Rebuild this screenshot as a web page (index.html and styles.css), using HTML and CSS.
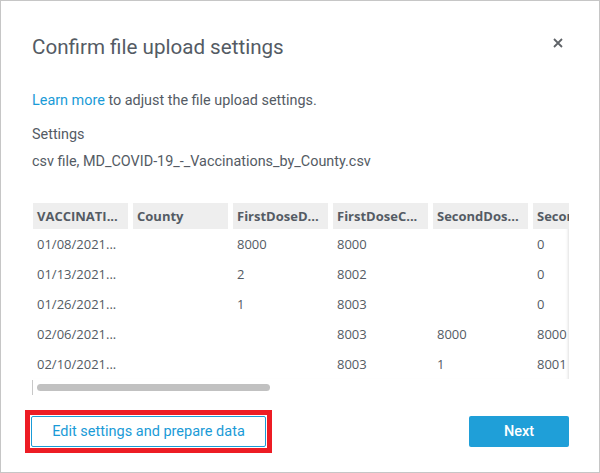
FILE: index.html
```html
<!DOCTYPE html>
<html lang="en">
<head>
    <meta charset="UTF-8">
    <meta name="viewport" content="width=device-width, initial-scale=1.0">
    <title>Confirm file upload settings</title>
    <link rel="stylesheet" href="styles.css">
</head>
<body>
    <div class="dialog">
        <header class="dialog-header">
            <h1>Confirm file upload settings</h1>
            <button class="close" aria-label="Close">
                <svg width="10" height="10" viewBox="0 0 10 10">
                    <path d="M1 1 L9 9 M9 1 L1 9" stroke="#5f6368" stroke-width="1.8" fill="none"/>
                </svg>
            </button>
        </header>

        <p class="intro"><a href="#">Learn more</a> to adjust the file upload settings.</p>
        <p class="label">Settings</p>
        <p class="file">csv file, MD_COVID-19_-_Vaccinations_by_County.csv</p>

        <div class="preview">
            <div class="grid">
                <div class="th">VACCINATI...</div>
                <div class="th">County</div>
                <div class="th">FirstDoseD...</div>
                <div class="th">FirstDoseC...</div>
                <div class="th">SecondDos...</div>
                <div class="th">SecondDoseCumulative</div>

                <div class="td">01/08/2021...</div>
                <div class="td"></div>
                <div class="td">8000</div>
                <div class="td">8000</div>
                <div class="td"></div>
                <div class="td">0</div>

                <div class="td">01/13/2021...</div>
                <div class="td"></div>
                <div class="td">2</div>
                <div class="td">8002</div>
                <div class="td"></div>
                <div class="td">0</div>

                <div class="td">01/26/2021...</div>
                <div class="td"></div>
                <div class="td">1</div>
                <div class="td">8003</div>
                <div class="td"></div>
                <div class="td">0</div>

                <div class="td">02/06/2021...</div>
                <div class="td"></div>
                <div class="td"></div>
                <div class="td">8003</div>
                <div class="td">8000</div>
                <div class="td">8000</div>

                <div class="td">02/10/2021...</div>
                <div class="td"></div>
                <div class="td"></div>
                <div class="td">8003</div>
                <div class="td">1</div>
                <div class="td">8001</div>
            </div>
        </div>
        <div class="scrollbar">
            <div class="thumb"></div>
        </div>

        <footer class="dialog-footer">
            <div class="highlight">
                <button class="btn btn-secondary">Edit settings and prepare data</button>
            </div>
            <button class="btn btn-primary">Next</button>
        </footer>
    </div>
</body>
</html>
```

FILE: styles.css
```css
html, body {
    margin: 0;
    height: 100%;
    background-color: #ffffff;
}
.dialog {
    box-sizing: border-box;
    width: 600px;
    height: 473px;
    border: 1px solid #c6c6c6;
    padding: 0 30px 0 31px;
    font-family: Roboto, "Noto Sans", sans-serif;
    color: #545b64;
}
.dialog-header {
    display: flex;
    justify-content: space-between;
    align-items: center;
    padding-top: 31px;
}
.dialog-header h1 {
    margin: 0;
    font-size: 20.6px;
    font-weight: 400;
    line-height: 30px;
    color: #545b64;
}
.close {
    border: none;
    background: none;
    padding: 0;
    margin-right: 6px;
    margin-top: -8px;
    width: 10px;
    height: 10px;
    display: flex;
}
.intro, .label, .file {
    margin: 0;
    font-size: 14.4px;
    line-height: 20px;
}
.intro {
    margin-top: 29px;
}
.intro a {
    color: #1a9bd7;
    text-decoration: none;
}
.label {
    margin-top: 14px;
}
.file {
    margin-top: 7px;
}
.preview {
    margin-top: 31px;
    margin-left: 1px;
    width: 536px;
    overflow: hidden;
    box-shadow: inset -3px 0 3px -2px rgba(0, 0, 0, 0.12);
}
.grid {
    display: grid;
    grid-template-columns: repeat(6, 95px);
    grid-auto-rows: 30px;
    grid-template-rows: 26px;
    column-gap: 5px;
    font-family: "Open Sans", sans-serif;
    font-size: 13px;
    color: #545b64;
}
.th, .td {
    padding: 0 4px;
    white-space: nowrap;
    overflow: hidden;
}
.th {
    line-height: 26px;
    background-color: #eeeeee;
    font-weight: 700;
}
.td {
    line-height: 31px;
}
.scrollbar {
    margin-top: 1px;
    height: 15px;
    border-left: 1px solid #c8c8c8;
    display: flex;
    align-items: center;
    padding-left: 4px;
}
.thumb {
    width: 233px;
    height: 7px;
    border-radius: 4px;
    background-color: #c1c1c1;
}
.dialog-footer {
    display: flex;
    justify-content: space-between;
    align-items: center;
    margin-top: 15px;
    margin-left: -7px;
}
.highlight {
    border: 5px solid #ed1c24;
    padding: 1px;
    display: flex;
}
.btn {
    height: 31px;
    font-family: Roboto, "Noto Sans", sans-serif;
    font-size: 14.5px;
    border-radius: 2px;
    cursor: pointer;
}
.btn-secondary {
    width: 235px;
    background-color: #ffffff;
    border: 1px solid #1a9bd7;
    color: #1a9bd7;
}
.btn-primary {
    width: 100px;
    background-color: #1f9fd8;
    border: none;
    color: #ffffff;
    font-weight: 500;
}
```
